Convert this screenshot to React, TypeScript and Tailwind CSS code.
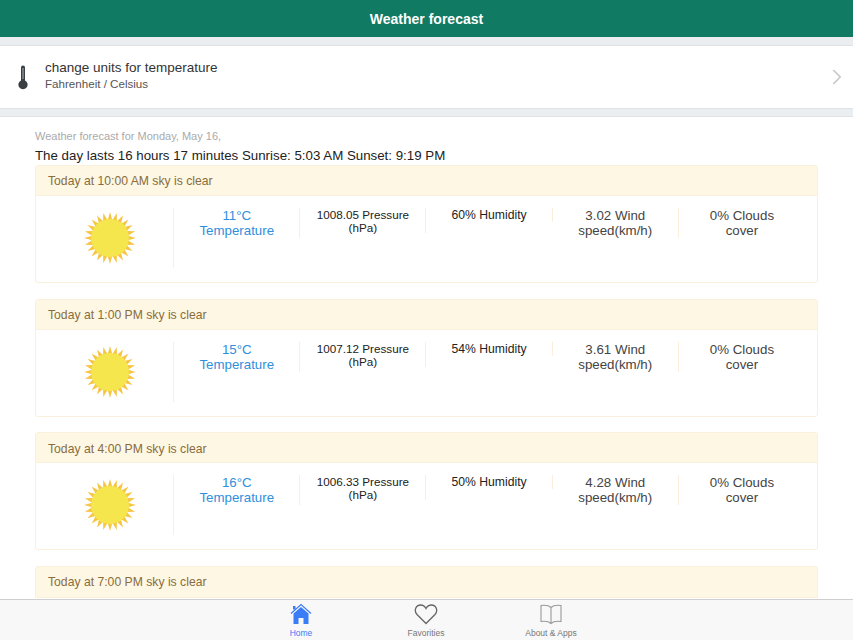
import { ChevronRight } from 'lucide-react';

const FORECASTS = [
  { time: '10:00 AM', temp: '11°C', pressure: '1008.05', humidity: '60%', wind: '3.02' },
  { time: '1:00 PM', temp: '15°C', pressure: '1007.12', humidity: '54%', wind: '3.61' },
  { time: '4:00 PM', temp: '16°C', pressure: '1006.33', humidity: '50%', wind: '4.28' },
];

// 24 pointed rays round a disc
function sunPoints() {
  const pts: string[] = [];
  for (let i = 0; i < 48; i++) {
    const r = i % 2 === 0 ? 26 : 18;
    const a = (i * Math.PI) / 24 - Math.PI / 2;
    pts.push(`${(26 + r * Math.cos(a)).toFixed(2)},${(26 + r * Math.sin(a)).toFixed(2)}`);
  }
  return pts.join(' ');
}

function Sun() {
  return (
    <svg width="52" height="52" viewBox="0 0 52 52">
      <polygon points={sunPoints()} fill="#f6c544" />
      <circle cx="26" cy="26" r="19" fill="#f5e64e" />
    </svg>
  );
}

function Thermometer() {
  return (
    <svg width="12" height="26" viewBox="0 0 12 26">
      <path d="M4 3.5a2 2 0 0 1 4 0V16.500a4.600 4.600 0 1 1-4 0Z" fill="#3a3f42" />
      <rect x="5.400" y="4" width="1.200" height="11" fill="#9aa0a3" />
    </svg>
  );
}

function Card({ time, temp, pressure, humidity, wind }: (typeof FORECASTS)[number]) {
  return (
    <div className="mb-[15.7px] h-[118px] shrink-0 overflow-hidden rounded-[3px] border border-[#faf0dc] bg-white">
      <div className="flex h-[30px] items-center border-b border-[#faf0dc] bg-[#fdf7e4] pl-3 pt-[2px] text-[12.2px] text-[#8a6d3b]">
        Today at {time} sky is clear
      </div>
      <div className="grid grid-cols-6 items-start px-3 pt-3 text-center">
        <div className="flex h-[60px] items-center justify-center border-r border-[#fbeedd] pr-[2px]">
          <Sun />
        </div>
        <div className="h-[30px] border-r border-[#fbeedd] text-[13.3px] leading-[15px] text-[#2f8fdc]">
          <div>{temp}</div>
          <div>Temperature</div>
        </div>
        <div className="h-[25px] border-r border-[#fbeedd] px-3 text-[11.7px] leading-[13px] text-[#222]">
          {pressure} Pressure (hPa)
        </div>
        <div className="h-[14px] border-r border-[#fbeedd] pt-[1px] text-[12.2px] leading-[13px] text-[#222]">
          {humidity} Humidity
        </div>
        <div className="h-[30px] border-r border-[#fbeedd] px-5 text-[13.3px] leading-[15px] text-[#444]">
          {wind} Wind speed(km/h)
        </div>
        <div className="px-5 text-[13.3px] leading-[15px] text-[#444]">0% Clouds cover</div>
      </div>
    </div>
  );
}

export default function App() {
  return (
    <div className="flex h-screen flex-col overflow-hidden bg-white font-['Liberation_Sans',Arial,sans-serif]">
      {/* Header */}
      <header className="flex h-[37px] shrink-0 items-center justify-center bg-[#107a62] pt-[2px] text-[14px] font-bold text-white">
        Weather forecast
      </header>
      <div className="h-[9px] shrink-0 border-b border-[#dfe3e5] bg-[#ebeef0]" />

      {/* Units row */}
      <div className="flex h-[62px] shrink-0 items-center bg-white pl-[17px] pr-[3px]">
        <Thermometer />
        <div className="ml-4 mb-[6px] flex-1">
          <p className="text-[13.5px] leading-[17px] text-[#333]">change units for temperature</p>
          <p className="mt-[1px] text-[11.6px] leading-[13px] text-[#555]">Fahrenheit / Celsius</p>
        </div>
        <ChevronRight size={26} strokeWidth={1.5} className="text-[#c4c7c9]" />
      </div>
      <div className="h-[9px] shrink-0 border-y border-[#dfe3e5] bg-[#ebeef0]" />

      {/* Forecast list */}
      <main className="flex min-h-0 flex-1 flex-col overflow-hidden px-[35px] pt-[12px]">
        <p className="text-[11px] leading-[14px] font-light text-[#aaa]">
          Weather forecast for Monday, May 16,
        </p>
        <p className="mt-[5px] mb-[2px] text-[13.3px] leading-[15px] text-[#222]">
          The day lasts 16 hours 17 minutes Sunrise: 5:03 AM Sunset: 9:19 PM
        </p>
        {FORECASTS.map((f) => (
          <Card key={f.time} {...f} />
        ))}
        <div className="rounded-t-[3px] border border-[#faf0dc] bg-[#fdf7e4] py-[5px] pl-3 text-[12.2px] leading-[20px] text-[#8a6d3b]">
          Today at 7:00 PM sky is clear
        </div>
      </main>

      {/* Tab bar */}
      <nav className="flex h-[41px] shrink-0 justify-center border-t border-[#cfcfcf] bg-[#f8f8f8] pr-[1px]">
        <div className="flex w-[125px] flex-col items-center text-[#3b7cf7]">
          <svg width="22" height="22" viewBox="0 0 22 22" className="mt-[3px]">
            <path d="M1 10.500 11 1.500 21 10.500" fill="none" stroke="#3b7cf7" strokeWidth="1.200" />
            <path d="M11 4 18.500 10.500V21H13.500V15H8.500V21H3.500V10.500Z" fill="#3b7cf7" />
            <rect x="3" y="3" width="2.500" height="3.500" fill="#3b7cf7" />
          </svg>
          <span className="mt-[3px] text-[8.5px] leading-[11px]">Home</span>
        </div>
        <div className="flex w-[125px] flex-col items-center text-[#777]">
          <svg width="24" height="22" viewBox="0 0 24 22" className="mt-[3px]">
            <path d="M12 20.500 3 11.500C-.5 7.500 2 2 6.500 2 9 2 11 3.500 12 5.500 13 3.500 15 2 17.500 2 22 2 24.500 7.500 21 11.500Z" fill="none" stroke="#666" strokeWidth="1.300" />
          </svg>
          <span className="mt-[3px] text-[8.5px] leading-[11px]">Favorities</span>
        </div>
        <div className="flex w-[125px] flex-col items-center text-[#777]">
          <svg width="24" height="22" viewBox="0 0 24 22" className="mt-[3px]">
            <path d="M12 4.500C10 2.500 6 2 2 2.500V18.500C6 18 10 18.500 12 20.500 14 18.500 18 18 22 18.500V2.500C18 2 14 2.500 12 4.500ZM12 4.500V20.500" fill="none" stroke="#999" strokeWidth="1.100" />
          </svg>
          <span className="mt-[3px] text-[8.5px] leading-[11px]">About &amp; Apps</span>
        </div>
      </nav>
    </div>
  );
}
